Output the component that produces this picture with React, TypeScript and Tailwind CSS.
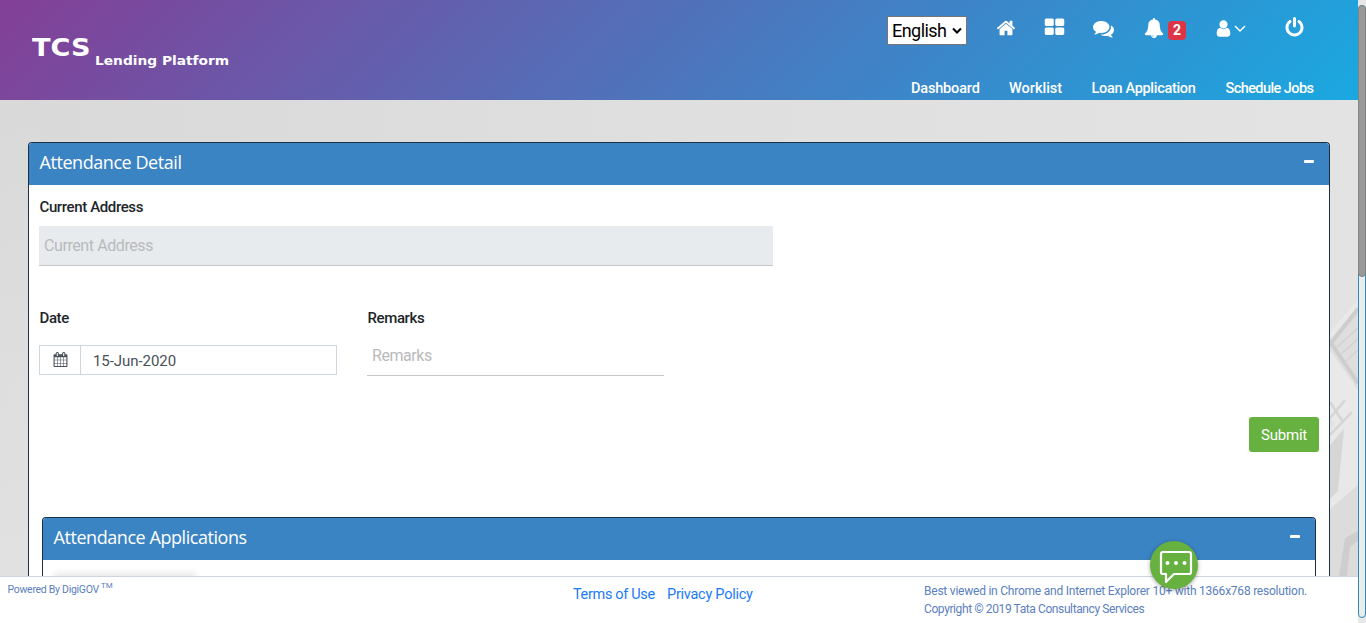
import type { ReactNode } from "react";

const ICONS = {
  home: "M1472 992v480q0 26-19 45t-45 19h-384v-384h-256v384h-384q-26 0-45-19t-19-45v-480q0-1 .5-3t.5-3l575-474 575 474q1 2 1 6zm223-69l-62 74q-8 9-21 11h-3q-13 0-21-7l-692-577-692 577q-12 8-24 7-13-2-21-11l-62-74q-8-10-7-23.5t11-21.5l719-599q32-26 76-26t76 26l244 204v-195q0-14 9-23t23-9h192q14 0 23 9t9 23v408l219 182q10 8 11 21.5t-7 23.5z",
  grid: "M832 1024v384q0 52-38 90t-90 38h-512q-52 0-90-38t-38-90v-384q0-52 38-90t90-38h512q52 0 90 38t38 90zm0-768v384q0 52-38 90t-90 38h-512q-52 0-90-38t-38-90v-384q0-52 38-90t90-38h512q52 0 90 38t38 90zm896 768v384q0 52-38 90t-90 38h-512q-52 0-90-38t-38-90v-384q0-52 38-90t90-38h512q52 0 90 38t38 90zm0-768v384q0 52-38 90t-90 38h-512q-52 0-90-38t-38-90v-384q0-52 38-90t90-38h512q52 0 90 38t38 90z",
  comments: "M1408 768q0 139-94 257t-256.5 186.5-353.5 68.5q-86 0-176-16-124 88-278 128-36 9-86 16h-3q-11 0-20.5-8t-11.5-21q-1-3-1-6.5t.5-6.5 2-6l2.5-5 3.5-5.5 4-5 4.5-5 4-4.5q5-6 23-25t26-29.5 22.5-29 25-38.5 20.5-44q-124-72-195-177t-71-224q0-139 94-257t256.5-186.5 353.5-68.5 353.5 68.5 256.5 186.5 94 257zm384 256q0 120-71 224.5t-195 176.5q10 24 20.5 44t25 38.5 22.5 29 26 29.5 23 25q1 1 4 4.5t4.5 5 4 5 3.5 5.5l2.5 5 2 6 .5 6.5-1 6.5q-3 14-13 22t-22 7q-50-7-86-16-154-40-278-128-90 16-176 16-271 0-472-132 58 4 88 4 161 0 309-45t264-129q125-92 192-212t67-254q0-77-23-152 129 71 204 178t75 230z",
  bell: "M912 1696q0-16-16-16-59 0-101.5-42.5t-42.5-101.5q0-16-16-16t-16 16q0 73 51.5 124.5t124.5 51.5q16 0 16-16zm816-288q0 52-38 90t-90 38h-448q0 106-75 181t-181 75-181-75-75-181h-448q-52 0-90-38t-38-90q50-42 91-88t85-119.5 74.5-158.5 50-206 19.5-260q0-152 117-282.5t307-158.5q-8-19-8-39 0-40 28-68t68-28 68 28 28 68q0 20-8 39 190 28 307 158.5t117 282.5q0 139 19.5 260t50 206 74.5 158.5 85 119.5 91 88z",
  user: "M1536 1399q0 109-62.5 187t-150.5 78h-854q-88 0-150.5-78t-62.5-187q0-85 8.5-160.5t31.5-152 58.5-131 94-89 134.5-34.5q131 128 313 128t313-128q76 0 134.5 34.5t94 89 58.5 131 31.5 152 8.5 160.5zm-256-887q0 159-112.5 271.5t-271.5 112.5-271.5-112.5-112.5-271.5 112.5-271.5 271.5-112.5 271.5 112.5 112.5 271.5z",
  power: "M1664 896q0 156-61 298t-164 245-245 164-298 61-298-61-245-164-164-245-61-298q0-182 80.5-343t226.5-270q43-32 95.5-25t83.5 50q32 42 24.5 94.5t-49.5 84.5q-98 74-151.5 181t-53.5 228q0 104 40.5 198.5t109.5 163.5 163.5 109.5 198.5 40.5 198.5-40.5 163.5-109.5 109.5-163.5 40.5-198.5q0-121-53.5-228t-151.5-181q-42-32-49.5-84.5t24.5-94.5q31-43 84-50t95 25q146 109 226.5 270t80.5 343zm-640-768v640q0 52-38 90t-90 38-90-38-38-90v-640q0-52 38-90t90-38 90 38 38 90z",
  calendar: "M192 1664h288v-288h-288v288zm352 0h320v-288h-320v288zm-352-352h288v-320h-288v320zm352 0h320v-320h-320v320zm-352-384h288v-288h-288v288zm736 736h320v-288h-320v288zm-384-736h320v-288h-320v288zm768 736h288v-288h-288v288zm-384-352h320v-320h-320v320zm-352-864v-288q0-13-9.5-22.5t-22.5-9.5h-64q-13 0-22.5 9.5t-9.5 22.5v288q0 13 9.5 22.5t22.5 9.5h64q13 0 22.5-9.5t9.5-22.5zm736 864h288v-320h-288v320zm-384-384h320v-288h-320v288zm384 0h288v-288h-288v288zm32-480v-288q0-13-9.5-22.5t-22.5-9.5h-64q-13 0-22.5 9.5t-9.5 22.5v288q0 13 9.5 22.5t22.5 9.5h64q13 0 22.5-9.5t9.5-22.5zm384-64v1280q0 52-38 90t-90 38h-1408q-52 0-90-38t-38-90v-1280q0-52 38-90t90-38h128v-96q0-66 47-113t113-47h64q66 0 113 47t47 113v96h384v-96q0-66 47-113t113-47h64q66 0 113 47t47 113v96h128q52 0 90 38t38 90z",
};

function Icon({ name, className }: { name: keyof typeof ICONS; className: string }) {
  return (
    <svg viewBox="0 0 1792 1792" fill="currentColor" className={`shrink-0 ${className}`}>
      <path d={ICONS[name]} />
    </svg>
  );
}

function Header() {
  return (
    <header className="flex h-[100px] shrink-0 justify-between bg-[linear-gradient(135deg,#833f97_0%,#1aa8e0_100%)] text-white">
      <div className="flex pl-8 font-['DejaVu_Sans',sans-serif] font-bold whitespace-nowrap">
        <span className="mt-[34px] w-[63px] origin-left scale-x-[1.13] text-[24px] leading-7">TCS</span>
        <span className="mt-[53px] origin-left scale-x-[1.147] text-[12px] leading-4">Lending Platform</span>
      </div>
      <div className="flex w-[470px] flex-col justify-between">
        <div className="flex">
          <div className="-ml-px mt-4 flex h-[29px] w-20 shrink-0 items-center justify-between border border-[#767676] bg-white pr-1 pl-1 text-black">
            <span className="text-[18px] leading-7 tracking-[-0.55px]">English</span>
            <svg viewBox="0 0 10 8" className="h-2 w-2.5" fill="none" stroke="currentColor" strokeWidth="2">
              <path d="M1 1.5l4 4 4-4" />
            </svg>
          </div>
          <Icon name="home" className="mt-[18px] ml-[29px] size-5" />
          <Icon name="grid" className="mt-[17px] ml-7 size-[21px]" />
          <Icon name="comments" className="mt-[18px] ml-7 size-[21px]" />
          <Icon name="bell" className="mt-[18px] ml-[30px] size-5" />
          <span className="mt-[21px] ml-1 flex h-[19px] w-[18px] items-center justify-center rounded bg-[#dc3545] text-[14px] font-bold">
            2
          </span>
          <Icon name="user" className="mt-[19px] ml-7 size-[19px]" />
          <svg viewBox="0 0 12 8" className="mt-[25px] ml-px h-2 w-3" fill="none" stroke="currentColor" strokeWidth="1.5">
            <path d="M1 1l5 5 5-5" />
          </svg>
          <Icon name="power" className="mt-[17px] ml-[38px] size-[21px]" />
        </div>
        <nav className="flex pl-[23px] text-[14.5px] leading-[23px] font-medium whitespace-nowrap">
          <a className="w-[98px] tracking-[-0.17px]">Dashboard</a>
          <a className="w-[82.5px]">Worklist</a>
          <a className="w-[134px] tracking-[-0.31px]">Loan Application</a>
          <a className="tracking-[-0.58px]">Schedule Jobs</a>
        </nav>
      </div>
    </header>
  );
}

function Backdrop() {
  return (
    <svg viewBox="0 0 1358 476" className="absolute inset-0 size-full">
      <defs>
        <linearGradient id="wall" x1="0" x2="1" y1="0" y2="0">
          <stop offset="0" stopColor="#d9d9d9" />
          <stop offset="0.6" stopColor="#e0e0e0" />
          <stop offset="1" stopColor="#e3e3e3" />
        </linearGradient>
        <linearGradient id="haze" x1="0" x2="0" y1="0" y2="1">
          <stop offset="0" stopColor="#fff" stopOpacity="0" />
          <stop offset="1" stopColor="#fff" stopOpacity="0.22" />
        </linearGradient>
      </defs>
      <rect width="1358" height="476" fill="url(#wall)" />
      <rect width="40" height="476" fill="url(#haze)" />
      <path d="M1330 232l28-32v150l-28-32z" fill="#e9e9e9" />
      <path d="M1330 240l28-34v84l-28-40z" fill="#dedede" />
      <path d="M1358 209l-27 34 27 40" fill="none" stroke="#cdcdcd" strokeWidth="4" />
      <path d="M1336 248l22-20M1340 255l18-16M1345 262l13-12" stroke="#d2d2d2" strokeWidth="1.5" />
      <path d="M1330 330v140l28-72v-76l-10-12z" fill="#e8e8e8" />
      <path d="M1330 302l13 20M1330 318l15-18M1330 335l22-23" fill="none" stroke="#d5d5d5" strokeWidth="2.5" />
      <path d="M1330 345l14-16-6 62-8 8z" fill="#d6d6d6" />
      <path d="M1330 409l28-24v91h-28z" fill="#dcdcdc" />
      <path d="M1339 476l6-38 13-7v10l-8 6-3 29z" fill="#cecece" />
    </svg>
  );
}

function Panel({ title, className, children }: { title: string; className: string; children?: ReactNode }) {
  return (
    <section className={`flex flex-col rounded-t border border-b-0 border-[#1b2f45] bg-white ${className}`}>
      <div className="flex h-[42px] shrink-0 items-start justify-between rounded-t-[3px] bg-[#3b84c4] pt-1.5 pr-[15px] pl-[10.5px] text-white">
        <h2 className="font-['Open_Sans',sans-serif] text-[18px] leading-[26px] tracking-[-0.44px]">{title}</h2>
        <span className="mt-[11px] h-[3px] w-2.5 rounded-[1px] bg-white" />
      </div>
      {children}
    </section>
  );
}

function Label({ children }: { children: ReactNode }) {
  return <label className="block pl-[0.5px] text-[15px] leading-6 font-medium tracking-[-0.38px] text-[#212529]">{children}</label>;
}

function AttendanceForm() {
  return (
    <div className="flex flex-col px-2.5 pt-2.5">
      <Label>Current Address</Label>
      <div className="mt-[7px] flex h-10 w-[734px] items-center border-b border-[#c6c8ca] bg-[#e8ebee] pl-[5px] text-[16px] tracking-[-0.41px] text-[#b9babb]">
        Current Address
      </div>
      <div className="mt-10 flex gap-[30px]">
        <div className="w-[298px]">
          <Label>Date</Label>
          <div className="mt-[15px] flex h-[30px] border border-[#ced4e0]">
            <div className="flex w-[41px] items-center justify-center border-r border-[#ced4e0] pb-0.5 text-[#495057]">
              <Icon name="calendar" className="size-[15px]" />
            </div>
            <span className="pl-3 text-[15px] leading-[30px] tracking-[-0.06px] text-[#495057]">15-Jun-2020</span>
          </div>
        </div>
        <div className="w-[297px]">
          <Label>Remarks</Label>
          <div className="mt-[5px] flex h-[41px] items-center border-b border-[#c6c8ca] pt-0.5 pl-[5px] text-[16px] tracking-[-0.45px] text-[#b9babb]">
            Remarks
          </div>
        </div>
      </div>
      <button className="mt-[41px] h-[35px] w-[70px] self-end rounded-[3px] bg-[#66b13f] pt-0.5 text-[15px] tracking-[-0.2px] text-white">
        Submit
      </button>
    </div>
  );
}

function Footer() {
  return (
    <footer className="flex h-[47px] shrink-0 border-t border-[#ced4e0] bg-white whitespace-nowrap text-[#5b7fc0]">
      <div className="flex w-[573px] pt-[5px] pl-[7.5px] text-[10.5px] leading-4">
        <span className="tracking-[-0.28px]">Powered By DigiGOV</span>
        <span className="-mt-1 pl-0.5 text-[8px]">TM</span>
      </div>
      <div className="flex w-[351px] pt-1.5 text-[14.5px] leading-6 text-[#1a7bf8]">
        <a className="w-[94px] tracking-[-0.33px]">Terms of Use</a>
        <a className="tracking-[-0.26px]">Privacy Policy</a>
      </div>
      <div className="pt-[5px] text-[12px] leading-[18px]">
        <p className="tracking-[-0.228px]">Best viewed in Chrome and Internet Explorer 10+ with 1366x768 resolution.</p>
        <p className="tracking-[-0.4px]">Copyright © 2019 Tata Consultancy Services</p>
      </div>
    </footer>
  );
}

export default function App() {
  return (
    <div className="flex h-[623px] w-[1366px] overflow-hidden font-[Roboto,sans-serif]">
      <div className="relative flex w-[1358px] flex-col">
        <Header />
        <main className="relative h-[476px] overflow-hidden">
          <Backdrop />
          <div className="relative px-7 pt-[42px]">
            <Panel title="Attendance Detail" className="h-[460px]">
              <AttendanceForm />
              <div className="mt-[65px] px-[13px]">
                <Panel title="Attendance Applications" className="h-20">
                  <div className="mt-[15px] ml-3.5 h-8 w-[136px] bg-[#ececec] shadow-[0_0_6px_3px_#ececec]" />
                </Panel>
              </div>
            </Panel>
          </div>
        </main>
        <Footer />
        <button className="absolute top-[541px] left-[1150px] flex size-12 items-center justify-center rounded-full bg-[#66b13f] text-white shadow-[0_1px_4px_rgba(0,0,0,0.35)]">
          <svg viewBox="0 0 48 48" className="size-12" fill="none">
            <path
              d="M13 11h26q2 0 2 2v18q0 2-2 2H24l-8 8v-8h-3q-2 0-2-2V13q0-2 2-2z"
              stroke="currentColor"
              strokeWidth="2.2"
              strokeLinejoin="round"
            />
            <circle cx="17.5" cy="22" r="2" fill="currentColor" />
            <circle cx="26" cy="22" r="2" fill="currentColor" />
            <circle cx="34.5" cy="22" r="2" fill="currentColor" />
          </svg>
        </button>
      </div>
      <div className="w-2 bg-[#e8e8e8] pt-[5px]">
        <div className="h-[613px] rounded-full border border-[#2c8cc0] bg-[#ececec]">
          <div className="-mx-px -mt-px h-[272px] rounded-full border border-[#828282] bg-[#999]" />
        </div>
      </div>
    </div>
  );
}
